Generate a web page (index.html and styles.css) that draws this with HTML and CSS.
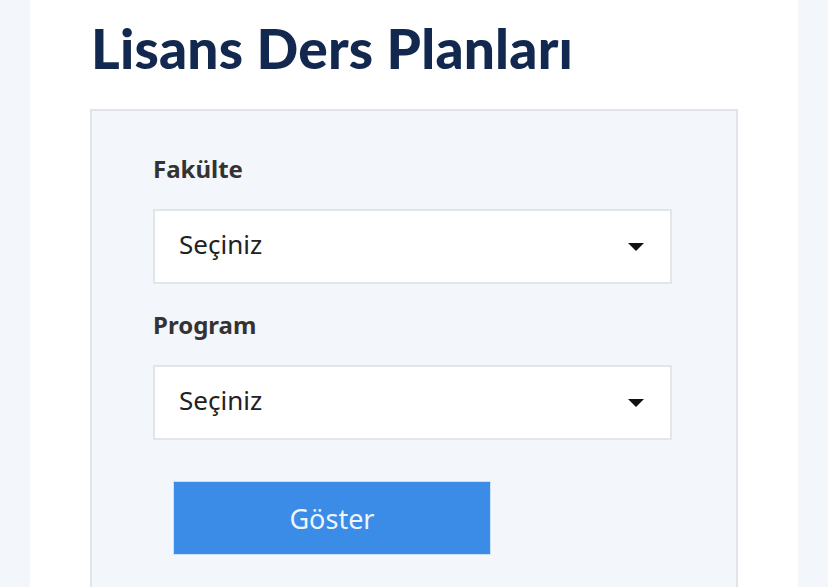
FILE: index.html
```html
<!DOCTYPE html>
<html lang="tr">
<head>
<meta charset="utf-8">
<link rel="stylesheet" href="styles.css">
</head>
<body>
<main class="panel">
  <h1 class="title">Lisans Ders Planları</h1>
  <section class="box">
    <div class="field">
      <label class="label">Fakülte</label>
      <div class="select"><span>Seçiniz</span><span class="caret"></span></div>
    </div>
    <div class="field">
      <label class="label">Program</label>
      <div class="select"><span>Seçiniz</span><span class="caret"></span></div>
    </div>
    <button class="btn">Göster</button>
  </section>
</main>
</body>
</html>
```
FILE: styles.css
```css
html, body { margin: 0; padding: 0; }
body {
  background: #f3f6fb;
  font-family: "Noto Sans", "Open Sans", sans-serif;
  height: 587px;
  overflow: hidden;
}
.panel {
  margin: 0 30px;
  background: #fff;
  padding: 15px 60px 0 60px;
  min-height: 587px;
  box-sizing: border-box;
}
.title {
  margin: 0 0 0 1px;
  font-family: "Lato", "Noto Sans", sans-serif;
  font-weight: 900;
  font-size: 55px;
  line-height: 66px;
  color: #12284f;
  letter-spacing: 0.2px;
  height: 94px;
}
.box {
  background: #f3f6fb;
  border: 2px solid #dfe4ea;
  border-bottom: none;
  padding: 41px 64px 60px 61px;
  min-height: 500px;
  box-sizing: border-box;
}
.field { display: flex; flex-direction: column; }
.label {
  font-weight: 700;
  font-size: 24px;
  line-height: 34px;
  color: #333;
  margin-bottom: 23px;
}
.select {
  height: 75px;
  box-sizing: border-box;
  background: #fff;
  border: 2px solid #e2e5e9;
  display: flex;
  align-items: center;
  justify-content: space-between;
  padding: 0 24px 6px 24px;
  font-size: 26px;
  color: #222;
  margin-bottom: 22px;
}
.field + .field .label { margin-top: 2px; margin-bottom: 23px; }
.caret {
  width: 0; height: 0;
  border-left: 8px solid transparent;
  border-right: 8px solid transparent;
  border-top: 8px solid #111;
  margin: 6px 2px 0 0;
}
.btn {
  margin: 19px 0 0 20px;
  width: 318px;
  height: 74px;
  background: #3a8ce6;
  border: 1px solid #cfe0f5;
  color: #eef4fb;
  font-family: "Noto Sans", sans-serif;
  font-size: 27px;
  display: flex;
  align-items: center;
  justify-content: center;
}
```
